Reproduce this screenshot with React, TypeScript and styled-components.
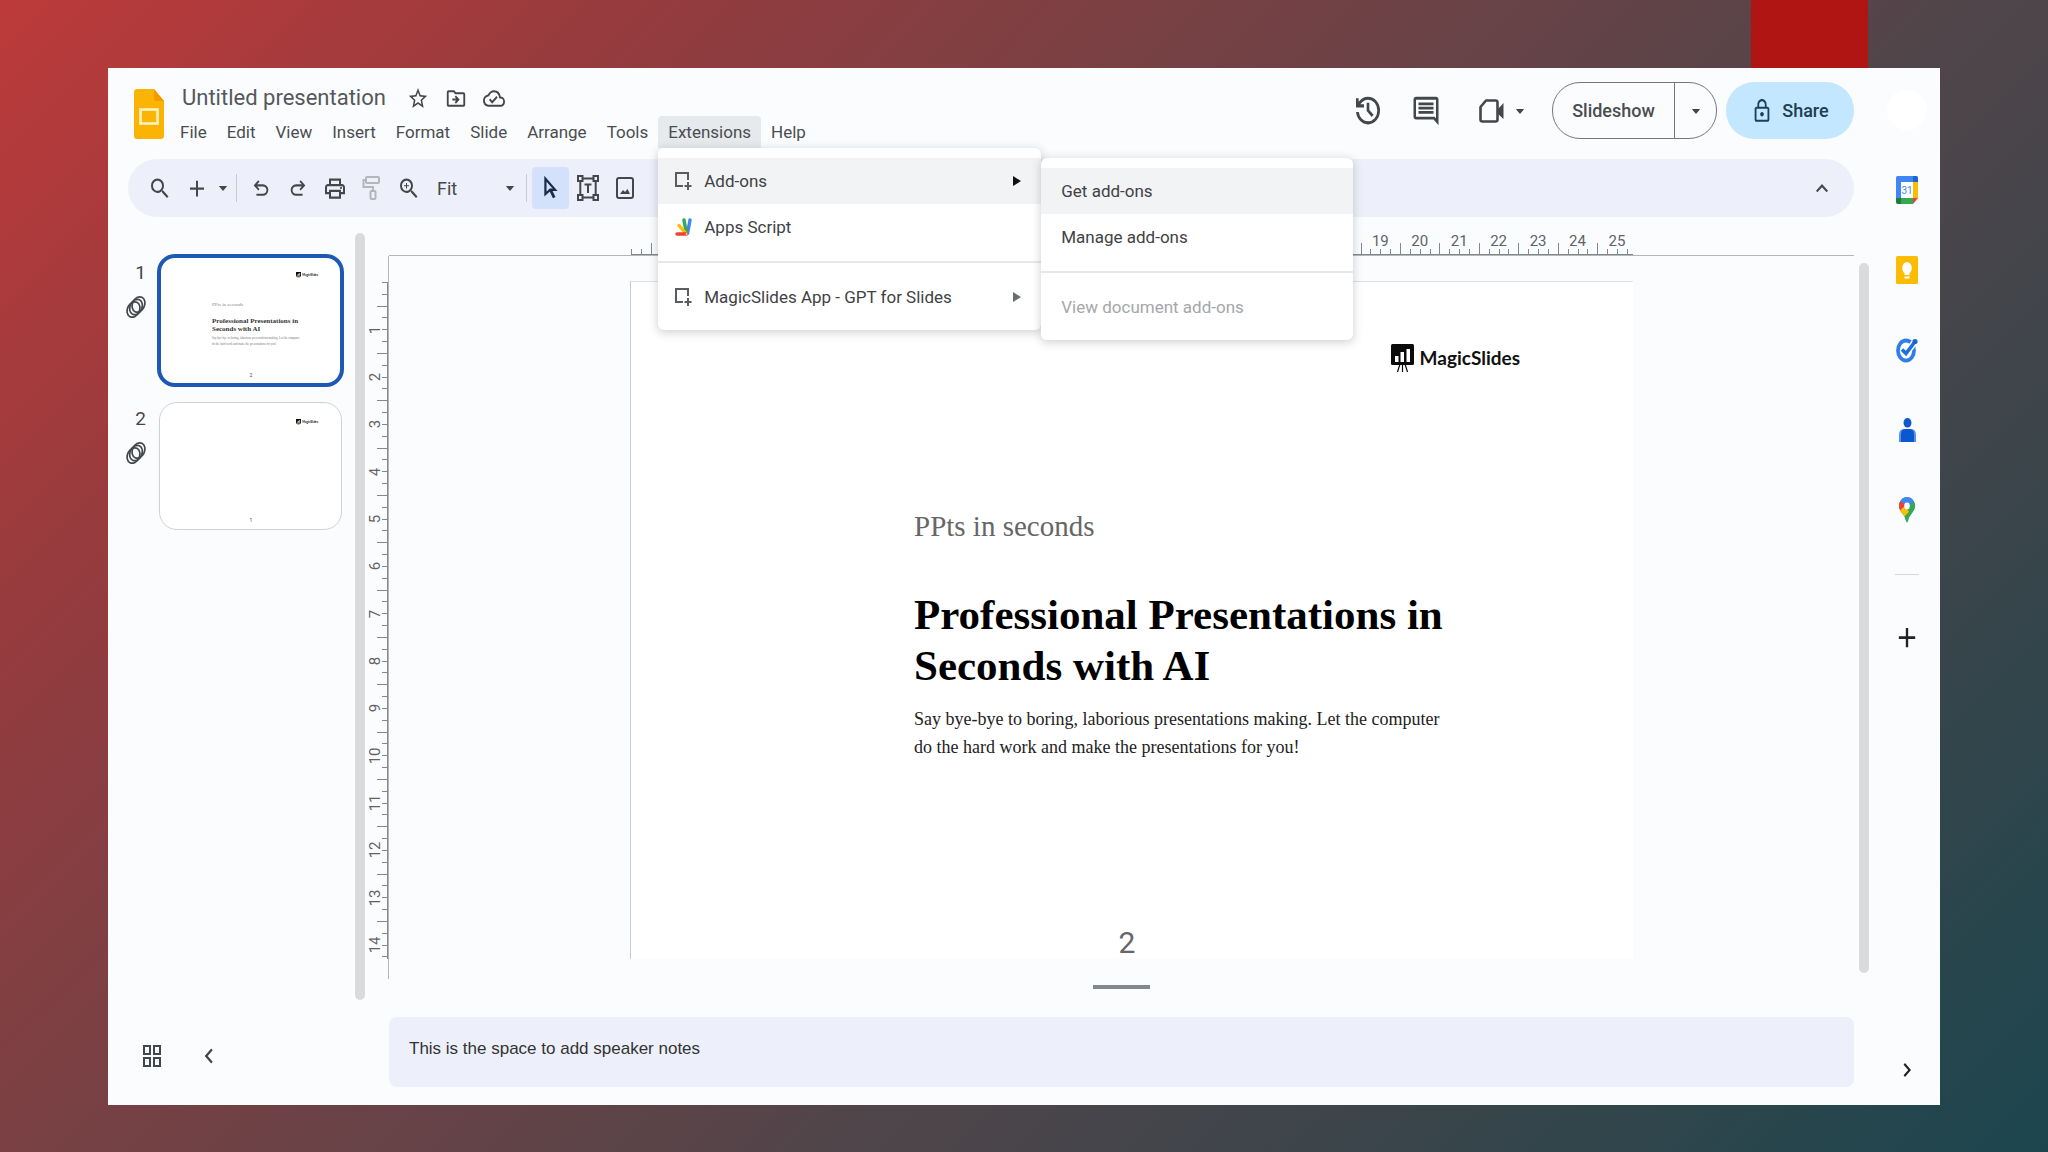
import React from "react";
import styled, { createGlobalStyle, css } from "styled-components";
import {
  MdAdd,
  MdArrowDropDown,
  MdChevronLeft,
  MdChevronRight,
  MdKeyboardArrowUp,
  MdLockOutline,
  MdOutlineCloudDone,
  MdOutlineDriveFileMove,
  MdOutlinePrint,
  MdSearch,
  MdStarOutline,
  MdZoomIn,
  MdOutlineInsertComment,
} from "react-icons/md";
import type { IconType } from "react-icons";

const ui = `Roboto, "Liberation Sans", sans-serif`;
const serif = `"Liberation Serif", serif`;
const ink = "#44474a";

const GlobalStyle = createGlobalStyle`
  *, *::before, *::after { box-sizing: border-box; }
  body { margin: 0; font-family: ${ui}; color: ${ink}; }
  button, select, textarea { font: inherit; color: inherit; border: 0; background: none; padding: 0; margin: 0; }
  button { cursor: pointer; }
  ul { list-style: none; margin: 0; padding: 0; }
  h1, h2, p { margin: 0; }
  svg { display: block; flex: none; }
`;

const Backdrop = styled.div`
  position: relative;
  display: flex;
  height: 100vh;
  min-height: 900px;
  padding: 68px 108px 47px;
  background: linear-gradient(135deg, #bd3a3a 0%, #963b3e 20%, #7d4043 34%, #50454a 62%, #36454b 82%, #1c464e 100%);
`;

const Ribbon = styled.div`
  position: absolute;
  top: 0;
  right: 180px;
  width: 117px;
  height: 68px;
  background: #b01513;
`;

const Window = styled.div`
  flex: 1;
  min-width: 0;
  display: flex;
  background: #fbfcfe;
`;

const Main = styled.div`
  flex: 1;
  min-width: 0;
  display: flex;
  flex-direction: column;
`;

/* ---------- header ---------- */

const Header = styled.header`
  display: flex;
  justify-content: space-between;
  height: 91px;
  padding: 14px 20px 0 26px;
`;

const Brand = styled.div`
  display: flex;
  gap: 18px;
`;

const LogoLink = styled.a`
  padding-top: 7px;
`;

const TitleRow = styled.div`
  display: flex;
  align-items: center;
  height: 32px;
  margin-bottom: 2px;
  gap: 16px;
`;

const Title = styled.h1`
  font-size: 22px;
  line-height: 32px;
  font-weight: 400;
  color: #55585b;
  margin-right: 5px;
  white-space: nowrap;
`;

const PlainButton = styled.button`
  display: flex;
  align-items: center;
  justify-content: center;
`;

const MenuBar = styled.ul`
  display: flex;
  margin-left: -12px;
`;

const MenuEntry = styled.li`
  position: relative;
`;

const MenuButton = styled.button<{ $open?: boolean }>`
  height: 32px;
  padding: 0 10px;
  font-size: 17px;
  line-height: 32px;
  color: #4a4d50;
  border-radius: 4px 4px 0 0;
  background: ${(p) => (p.$open ? "#e7eaec" : "transparent")};
`;

const Popup = styled.ul<{ $width: number; $side?: boolean }>`
  position: absolute;
  z-index: 2;
  top: ${(p) => (p.$side ? "0" : "100%")};
  left: ${(p) => (p.$side ? "100%" : "0")};
  width: ${(p) => p.$width}px;
  padding: 10px 0;
  border-radius: 6px;
  background: #fff;
  box-shadow: 0 2px 8px 1px rgba(60, 64, 67, 0.22);
`;

const PopupRow = styled.li`
  position: relative;
`;

const PopupButton = styled.button<{ $active?: boolean; $wide?: boolean }>`
  display: flex;
  align-items: center;
  gap: 12px;
  width: 100%;
  height: 46px;
  padding: 0 20px 0 ${(p) => (p.$wide ? 20 : 16)}px;
  font-size: 17px;
  text-align: left;
  white-space: nowrap;
  color: #3f4245;
  background: ${(p) => (p.$active ? "#f2f3f4" : "transparent")};
  &:disabled { color: #a5a7a9; }
`;

const PopupLabel = styled.span`
  flex: 1;
`;

const Divider = styled.li`
  height: 2px;
  margin: 11px 0;
  background: #e6e8ea;
`;

const Actions = styled.div`
  display: flex;
  align-items: center;
  height: 57px;
`;

const ActionButton = styled(PlainButton)`
  width: 48px;
  height: 48px;
  margin-right: 10px;
`;

const MeetButton = styled(PlainButton)`
  height: 48px;
  margin: 0 22px 0 19px;
  gap: 6px;
`;

const SplitButton = styled.div`
  display: flex;
  height: 57px;
  margin-right: 9px;
  border: 1px solid #74787b;
  border-radius: 28px;
`;

const SlideshowButton = styled.button`
  width: 121px;
  font-size: 18px;
  font-weight: 500;
  color: #4a4d50;
`;

const SlideshowMore = styled(PlainButton)`
  width: 42px;
  border-left: 1px solid #74787b;
`;

const ShareButton = styled(PlainButton)`
  width: 128px;
  height: 57px;
  gap: 9px;
  border-radius: 28px;
  background: #c2e7ff;
  color: #1d3f54;
  font-size: 18px;
  font-weight: 500;
`;

/* ---------- toolbar ---------- */

const Toolbar = styled.div`
  display: flex;
  align-items: center;
  height: 58px;
  margin: 0 20px;
  padding: 0 14px 0 13px;
  border-radius: 29px;
  background: #edf0fa;
`;

const Tool = styled(PlainButton)<{ $on?: boolean; $narrow?: boolean }>`
  width: ${(p) => (p.$narrow ? 16 : 37)}px;
  height: 42px;
  border-radius: 4px;
  background: ${(p) => (p.$on ? "#d3e1fb" : "transparent")};
  &:disabled { color: #b3b6bb; }
`;

const ToolRule = styled.span`
  width: 1px;
  height: 28px;
  margin: 0 5px;
  background: #c7cad0;
`;

const ZoomPicker = styled.label`
  position: relative;
  display: flex;
  align-items: center;
  width: 94px;
  height: 42px;
`;

const ZoomSelect = styled.select`
  width: 100%;
  padding-left: 10px;
  appearance: none;
  font-size: 18px;
`;

const ZoomCaret = styled.span`
  position: absolute;
  right: 1px;
  pointer-events: none;
`;

const Spacer = styled.span`
  flex: 1;
`;

/* ---------- workspace ---------- */

const Workspace = styled.div`
  flex: 1;
  min-height: 0;
  display: flex;
`;

const Filmstrip = styled.ul`
  flex: none;
  width: 247px;
  display: flex;
  flex-direction: column;
  gap: 13px;
  padding: 37px 11px 0 18px;
`;

const FilmItem = styled.li`
  display: flex;
  gap: 11px;
`;

const FilmMeta = styled.div`
  display: flex;
  flex-direction: column;
  align-items: flex-end;
  gap: 11px;
  width: 20px;
  padding-top: 8px;
  font-size: 19px;
  line-height: 22px;
`;

const Thumb = styled.button<{ $active?: boolean }>`
  flex: 1;
  display: flex;
  flex-direction: column;
  height: ${(p) => (p.$active ? 133 : 128)}px;
  margin: ${(p) => (p.$active ? 0 : 2)}px;
  padding: ${(p) => (p.$active ? "13px 22px 5px 51px" : "15px 23px 6px 52px")};
  text-align: left;
  background: #fff;
  border: ${(p) => (p.$active ? "4px solid #1d58b5" : "1px solid #cfd1d3")};
  border-radius: 18px;
`;

const ThumbLogo = styled.span`
  align-self: flex-end;
  display: flex;
  align-items: center;
  gap: 1px;
  font: 700 3px/8px Lato, sans-serif;
  color: #111;
`;

const ThumbSubtitle = styled.span`
  margin-top: 22px;
  font: 5px/8px ${serif};
  color: #888;
`;

const ThumbTitle = styled.span`
  margin-top: 8px;
  font: 700 7px/8px ${serif};
  color: #333;
  white-space: nowrap;
`;

const ThumbText = styled.span`
  margin-top: 2px;
  font: 3px/6px ${serif};
  color: #777;
  white-space: nowrap;
`;

const ThumbNumber = styled.span`
  margin-top: auto;
  padding-right: 28px;
  text-align: center;
  font-size: 5px;
  line-height: 6px;
`;

const Track = styled.div<{ $right?: boolean }>`
  flex: none;
  width: 10px;
  border-radius: 5px;
  background: #d9dbdd;
  margin: ${(p) => (p.$right ? "7px 5px 27px" : "16px 0 0")};
`;

const Editor = styled.div`
  flex: 1;
  min-width: 0;
  display: grid;
  grid-template-columns: 24px 1fr 20px;
  grid-template-rows: 39px 1fr;
`;

const TopRuler = styled.div`
  grid-column: 2;
  display: flex;
  padding: 0 221px 0 242px;
  border-bottom: 1px solid #b4b7ba;
`;

const SideRuler = styled.div`
  grid-column: 1;
  display: flex;
  flex-direction: column;
  margin-bottom: 21px;
  padding: 26px 0 20px;
  border-right: 1px solid #b4b7ba;
`;

const Scale = styled.div<{ $vertical?: boolean }>`
  flex: 1;
  min-width: 0;
  min-height: 0;
  display: flex;
  flex-direction: ${(p) => (p.$vertical ? "column" : "row")};
  ${(p) => (p.$vertical ? "border-right" : "border-bottom")}: 1px solid #85888b;
`;

const ScaleUnit = styled.div<{ $vertical?: boolean; $total: number; $half?: boolean }>`
  flex: 0 0 calc(${(p) => (p.$half ? 50 : 100)}% / ${(p) => p.$total});
  min-height: 0;
  min-width: 0;
  display: flex;
  flex-direction: ${(p) => (p.$vertical ? "row" : "column")};
  justify-content: flex-end;
  align-items: stretch;
`;

const ScaleLabel = styled.span<{ $vertical?: boolean }>`
  flex: none;
  font-family: ${ui};
  font-size: 15px;
  line-height: 16px;
  text-align: center;
  color: #5f6368;
  ${(p) =>
    p.$vertical &&
    css`
      width: 16px;
      writing-mode: vertical-rl;
      transform: rotate(180deg);
    `}
`;

const Ticks = styled.div<{ $vertical?: boolean }>`
  display: flex;
  flex: none;
  flex-direction: ${(p) => (p.$vertical ? "column" : "row")};
  align-items: flex-end;
  ${(p) => (p.$vertical ? "width: 10px; margin-left: -6px;" : "height: 11px; margin-top: -6px;")}
`;

const Tick = styled.i<{ $vertical?: boolean; $long?: boolean }>`
  flex: 1;
  ${(p) =>
    p.$vertical
      ? `width: ${p.$long ? 10 : 5}px; border-top: 1px solid #85888b;`
      : `height: ${p.$long ? 11 : 5}px; border-left: 1px solid #85888b;`}
`;

const Canvas = styled.div`
  grid-column: 2;
  display: flex;
  flex-direction: column;
  align-items: stretch;
  padding: 25px 221px 0 241px;
`;

const Slide = styled.section`
  flex: 1;
  display: flex;
  flex-direction: column;
  padding: 62px 113px 0 283px;
  background: #fff;
  border-top: 1px solid #dfe1e3;
  border-left: 1px solid #c9cccf;
`;

const SlideLogo = styled.div`
  align-self: flex-end;
  display: flex;
  align-items: center;
  gap: 6px;
  font: 700 19px/28px Lato, sans-serif;
  color: #111;
`;

const SlideSubtitle = styled.p`
  margin-top: 136px;
  font: 29px/36px ${serif};
  color: #666;
`;

const SlideTitle = styled.h2`
  margin-top: 45px;
  font: 700 43px/51px ${serif};
  color: #000;
  white-space: nowrap;
`;

const SlideText = styled.p`
  margin-top: 14px;
  font: 18px/28px ${serif};
  color: #222;
  white-space: nowrap;
`;

const PageNumber = styled.span`
  align-self: center;
  margin-top: auto;
  margin-right: 180px;
  font-size: 30px;
  line-height: 32px;
  color: #666;
`;

const Grip = styled.div`
  align-self: center;
  width: 57px;
  height: 4px;
  margin: 26px 20px 11px 0;
  background: #85888b;
`;

/* ---------- footer ---------- */

const Footer = styled.footer`
  display: flex;
  align-items: center;
  padding: 17px 20px 18px 24px;
`;

const FooterTools = styled.div`
  flex: none;
  display: flex;
  gap: 17px;
  width: 257px;
  padding-top: 8px;
`;

const FooterButton = styled(PlainButton)`
  width: 40px;
  height: 40px;
`;

const Notes = styled.textarea`
  flex: 1;
  height: 70px;
  padding: 20px;
  resize: none;
  border-radius: 8px;
  background: #edf0fa;
  font: 17px/24px "Liberation Sans", Arial, sans-serif;
  color: #333;
`;

/* ---------- side rail ---------- */

const Rail = styled.aside`
  flex: none;
  display: flex;
  flex-direction: column;
  align-items: center;
  gap: 40px;
  width: 66px;
  padding: 22px 0 15px;
`;

const Avatar = styled.button`
  width: 40px;
  height: 40px;
  border-radius: 20px;
  background: #fff;
`;

const RailButton = styled(PlainButton)<{ $last?: boolean }>`
  width: 40px;
  height: 40px;
  color: #222;
  ${(p) => p.$last && "margin-top: auto;"}
`;

const RailRule = styled.span`
  width: 24px;
  height: 1px;
  margin: 4px 0 2px;
  background: #d5d8da;
`;

/* ---------- icons ---------- */

const GlyphBox = styled.span<{ $w: number; $h: number }>`
  flex: none;
  display: block;
  svg {
    width: ${(p) => p.$w}px;
    height: ${(p) => p.$h}px;
  }
`;

/** A package icon drawn in a box that may be taller than it is wide. */
const Glyph = ({ of: Icon, w = 24, h = 27 }: { of: IconType; w?: number; h?: number }) => (
  <GlyphBox $w={w} $h={h}>
    <Icon preserveAspectRatio="none" aria-hidden />
  </GlyphBox>
);

const Caret = () => <Glyph of={MdArrowDropDown} w={20} h={24} />;

const SlidesLogo = () => (
  <svg width="30" height="50" viewBox="0 0 30 50" aria-hidden>
    <path d="M3 0H20L30 12V47a3 3 0 0 1-3 3H3a3 3 0 0 1-3-3V3a3 3 0 0 1 3-3Z" fill="#fbb404" />
    <path d="M20 0 30 12H22a2 2 0 0 1-2-2Z" fill="#f29a00" />
    <rect x="6.500" y="20.500" width="17" height="14" fill="none" stroke="#fff3c4" strokeWidth="2.600" />
  </svg>
);

const HistoryIcon = () => (
  <svg width="32" height="37" viewBox="0 0 24 24" preserveAspectRatio="none" fill="currentColor" aria-hidden>
    <path d="M12 21q-3.450 0-6.012-2.288T3.050 13H5.100q.35 2.600 2.313 4.300T12 19q2.925 0 4.963-2.037T19 12q0-2.925-2.037-4.962T12 5q-1.725 0-3.225.8T6.250 8H9v2H3V4h2v2.350q1.275-1.600 3.113-2.475T12 3q1.875 0 3.513.713t2.850 1.924q1.212 1.213 1.925 2.850T21 12q0 1.875-.712 3.513t-1.925 2.850q-1.213 1.212-2.850 1.925T12 21m2.800-4.800L11 12.400V7h2v4.600l3.200 3.200z" />
  </svg>
);

const MeetIcon = () => (
  <svg width="25" height="24" viewBox="0 0 25 24" fill="none" aria-hidden>
    <path d="M7 1.500H16.500a2 2 0 0 1 2 2V20.500a2 2 0 0 1-2 2H3.500a2 2 0 0 1-2-2V8Z" stroke="currentColor" strokeWidth="2.600" strokeLinejoin="round" />
    <path d="M19 10 24.500 4V20L19 15Z" fill="currentColor" />
  </svg>
);

const undoPath =
  "M7 19v-2h7.100q1.575 0 2.737-1Q18 15 18 13.500t-1.163-2.500Q15.675 10 14.100 10H7.800l2.600 2.600L9 14 4 9l5-5 1.400 1.400L7.800 8h6.300q2.425 0 4.163 1.575Q20 11.150 20 13.500t-1.737 3.925Q16.525 19 14.100 19Z";

const UndoIcon = () => (
  <svg width="22" height="25" viewBox="0 0 24 24" preserveAspectRatio="none" fill="currentColor" aria-hidden>
    <path d={undoPath} />
  </svg>
);

const RedoIcon = () => (
  <svg width="22" height="25" viewBox="0 0 24 24" preserveAspectRatio="none" fill="currentColor" aria-hidden>
    <path d={undoPath} transform="translate(24 0) scale(-1 1)" />
  </svg>
);

const PaintIcon = () => (
  <svg width="20" height="26" viewBox="0 0 20 26" fill="none" stroke="currentColor" strokeWidth="2" aria-hidden>
    <rect x="4" y="2" width="13" height="6" rx="1" />
    <path d="M4 5H1.500V12H11V16" />
    <rect x="8.500" y="16" width="5" height="8" rx="1" />
  </svg>
);

const CursorIcon = () => (
  <svg width="15" height="24" viewBox="0 0 16 26" fill="none" stroke="#1b2b4b" strokeWidth="2.400" aria-hidden>
    <path d="M2.500 3 13 15H7.500L2.500 19.500Z" />
    <path d="M7.500 14 12 23.500" strokeWidth="3" />
  </svg>
);

const TextBoxIcon = () => (
  <svg width="22" height="26" viewBox="0 0 22 26" fill="none" stroke="currentColor" strokeWidth="2" aria-hidden>
    <rect x="1" y="1" width="4.500" height="5" />
    <rect x="16.500" y="1" width="4.500" height="5" />
    <rect x="1" y="20" width="4.500" height="5" />
    <rect x="16.500" y="20" width="4.500" height="5" />
    <path d="M5.500 3.500H16.500M5.500 22.500H16.500M3.300 6V20M18.700 6V20M7.500 9.500H14.500M11 9.500V18" />
  </svg>
);

const ImageIcon = () => (
  <svg width="18" height="22" viewBox="0 0 18 22" fill="none" aria-hidden>
    <rect x="1" y="1" width="16" height="20" rx="2" stroke="currentColor" strokeWidth="2" />
    <path d="M4 17 7 13 9 15 11.500 12 14 17Z" fill="currentColor" />
  </svg>
);

const AddonIcon = () => (
  <svg width="18" height="20" viewBox="0 0 18 20" fill="none" stroke="#5a5d60" strokeWidth="2" aria-hidden>
    <path d="M14 9V2H2V15H9" />
    <path d="M14 11V19M10.500 15H17.500" />
  </svg>
);

const AppsScriptIcon = () => (
  <svg width="18" height="20" viewBox="0 0 18 20" fill="none" strokeLinecap="round" strokeWidth="3.400" aria-hidden>
    <path d="M13.500 16.500 16 3" stroke="#4285f4" />
    <path d="M12.500 16.500 10 3" stroke="#34a853" />
    <path d="M12 16.500 5 8.500" stroke="#fbbc04" />
    <path d="M12 17 3 17" stroke="#ea4335" />
    <circle cx="12.500" cy="17" r=".8" fill="#fff" />
  </svg>
);

const ArrowRight = ({ color }: { color: string }) => (
  <svg width="8" height="10" viewBox="0 0 8 10" aria-hidden>
    <path d="M0 0 8 5 0 10Z" fill={color} />
  </svg>
);

const MotionIcon = () => (
  <svg width="20" height="24" viewBox="0 0 20 24" fill="none" stroke="#44474a" strokeWidth="1.700" aria-hidden>
    <ellipse cx="7.500" cy="14.500" rx="6" ry="8" transform="rotate(25 7.500 14.500)" />
    <ellipse cx="10" cy="12" rx="6" ry="8" transform="rotate(25 10 12)" />
    <ellipse cx="12.500" cy="9.500" rx="6" ry="8" transform="rotate(25 12.500 9.500)" />
  </svg>
);

const MagicLogo = ({ width, height }: { width: number; height: number }) => (
  <svg width={width} height={height} viewBox="0 0 23 28" preserveAspectRatio="none" aria-hidden>
    <rect width="23" height="21" rx="1.500" fill="#0b0b0b" />
    <path d="M4 12H7.500V18H4ZM9.500 8H13V18H9.500ZM15.500 5H19V18H15.500Z" fill="#fff" />
    <path d="M9 20 6.500 28M11.500 20V28M14 20 16.500 28" stroke="#0b0b0b" strokeWidth="1.200" />
  </svg>
);

const CalendarIcon = () => (
  <svg width="22" height="28" viewBox="0 0 22 28" aria-hidden>
    <path d="M1.500 0H17V6H5V22H0V2Q0 0 1.500 0Z" fill="#4285f4" />
    <path d="M17 0H20.500Q22 0 22 2V6H17Z" fill="#1967d2" />
    <path d="M17 6H22V22H17Z" fill="#fbbc04" />
    <path d="M5 22H17V28H5Z" fill="#34a853" />
    <path d="M0 22H5V28H1.500Q0 28 0 26Z" fill="#188038" />
    <path d="M17 22H22L17 28Z" fill="#ea4335" />
    <rect x="5" y="6" width="12" height="16" fill="#fff" />
    <text x="11" y="18" fontSize="10" fontFamily={ui} textAnchor="middle" fill="#4285f4">31</text>
  </svg>
);

const KeepIcon = () => (
  <svg width="22" height="28" viewBox="0 0 22 28" aria-hidden>
    <rect width="22" height="28" rx="1.500" fill="#fbbc04" />
    <ellipse cx="11" cy="12" rx="4.800" ry="6" fill="#fff" />
    <path d="M8.500 16H13.500V19H8.500ZM8.500 20.500H13.500V22.500H8.500Z" fill="#fff" />
  </svg>
);

const TasksIcon = () => (
  <svg width="22" height="26" viewBox="0 0 22 26" fill="none" aria-hidden>
    <ellipse cx="10" cy="13.500" rx="8" ry="10" stroke="#2f7de9" strokeWidth="3.800" />
    <path d="M6 12.500 10 16.500 19.500 4" stroke="#fff" strokeWidth="6.500" />
    <path d="M6 12.500 10 16.500 19.500 4" stroke="#1f6fe0" strokeWidth="3.600" />
    <circle cx="19" cy="4.500" r="2.600" fill="#1a63d8" />
  </svg>
);

const ContactsIcon = () => (
  <svg width="17" height="24" viewBox="0 0 17 24" aria-hidden>
    <ellipse cx="8.500" cy="4.800" rx="4" ry="4.800" fill="#1158c9" />
    <path d="M0 24V17Q0 11 5 11H12Q17 11 17 17V24Z" fill="#5c8df0" />
    <path d="M2 24V17Q2 11 6 11H11Q15 11 15 17V24Z" fill="#0b57d0" />
  </svg>
);

const MapsIcon = () => (
  <svg width="16" height="26" viewBox="0 0 16 26" aria-hidden>
    <clipPath id="pin">
      <path d="M8 0C3.500 0 0 4 0 9C0 15 6 17 7 24Q8 27 9 24C10 17 16 15 16 9C16 4 12.500 0 8 0Z" />
    </clipPath>
    <g clipPath="url(#pin)">
      <rect width="16" height="26" fill="#34a853" />
      <path d="M0 0H16V4L8 10 0 4Z" fill="#4285f4" />
      <path d="M0 3 8 9 3 14H0Z" fill="#ea4335" />
      <path d="M0 14 6 9 12 13 3 22Z" fill="#fbbc04" />
      <path d="M16 3 8 12 10 15 4 22 12 26 16 20Z" fill="#34a853" />
    </g>
    <ellipse cx="8" cy="9" rx="2.800" ry="3.400" fill="#fff" />
  </svg>
);

const GridIcon = () => (
  <svg width="18" height="22" viewBox="0 0 18 22" fill="none" stroke="currentColor" strokeWidth="2" aria-hidden>
    <path d="M1 1H7V9H1ZM11 1H17V9H11ZM1 13H7V21H1ZM11 13H17V21H11Z" />
  </svg>
);

/* ---------- pieces ---------- */

/** One ruler axis: a half unit first, then whole units centred on their number. */
const RulerScale = ({ length, vertical }: { length: number; vertical?: boolean }) => (
  <Scale $vertical={vertical}>
    <ScaleUnit $vertical={vertical} $total={length} $half>
      <Ticks $vertical={vertical}>
        <Tick $vertical={vertical} />
        <Tick $vertical={vertical} />
      </Ticks>
    </ScaleUnit>
    {Array.from({ length: Math.floor(length) }, (_, i) => (
      <ScaleUnit key={i} $vertical={vertical} $total={length}>
        <ScaleLabel $vertical={vertical}>{i + 1}</ScaleLabel>
        <Ticks $vertical={vertical}>
          <Tick $vertical={vertical} $long />
          <Tick $vertical={vertical} />
          <Tick $vertical={vertical} />
          <Tick $vertical={vertical} />
        </Ticks>
      </ScaleUnit>
    ))}
  </Scale>
);

const ExtensionsMenu = () => (
  <Popup $width={383}>
    <PopupRow>
      <PopupButton $active>
        <AddonIcon />
        <PopupLabel>Add-ons</PopupLabel>
        <ArrowRight color="#111" />
      </PopupButton>
      <Popup $width={312} $side>
        <PopupRow>
          <PopupButton $wide $active>Get add-ons</PopupButton>
        </PopupRow>
        <PopupRow>
          <PopupButton $wide>Manage add-ons</PopupButton>
        </PopupRow>
        <Divider role="separator" />
        <PopupRow>
          <PopupButton $wide disabled>View document add-ons</PopupButton>
        </PopupRow>
      </Popup>
    </PopupRow>
    <PopupRow>
      <PopupButton>
        <AppsScriptIcon />
        <PopupLabel>Apps Script</PopupLabel>
      </PopupButton>
    </PopupRow>
    <Divider role="separator" />
    <PopupRow>
      <PopupButton>
        <AddonIcon />
        <PopupLabel>MagicSlides App - GPT for Slides</PopupLabel>
        <ArrowRight color="#6a6d70" />
      </PopupButton>
    </PopupRow>
  </Popup>
);

const menus = ["File", "Edit", "View", "Insert", "Format", "Slide", "Arrange", "Tools", "Extensions", "Help"];

export default function App() {
  return (
    <Backdrop>
      <GlobalStyle />
      <Ribbon />
      <Window>
        <Main>
          <Header>
            <Brand>
              <LogoLink href="#home" aria-label="Slides home">
                <SlidesLogo />
              </LogoLink>
              <div>
                <TitleRow>
                  <Title>Untitled presentation</Title>
                  <PlainButton aria-label="Star"><Glyph of={MdStarOutline} w={22} h={25} /></PlainButton>
                  <PlainButton aria-label="Move"><Glyph of={MdOutlineDriveFileMove} w={22} h={25} /></PlainButton>
                  <PlainButton aria-label="Document status"><Glyph of={MdOutlineCloudDone} w={22} h={25} /></PlainButton>
                </TitleRow>
                <nav>
                  <MenuBar>
                    {menus.map((name) => (
                      <MenuEntry key={name}>
                        <MenuButton $open={name === "Extensions"}>{name}</MenuButton>
                        {name === "Extensions" && <ExtensionsMenu />}
                      </MenuEntry>
                    ))}
                  </MenuBar>
                </nav>
              </div>
            </Brand>
            <Actions>
              <ActionButton aria-label="Version history"><HistoryIcon /></ActionButton>
              <ActionButton aria-label="Comments"><Glyph of={MdOutlineInsertComment} w={30} h={34} /></ActionButton>
              <MeetButton aria-label="Join a call">
                <MeetIcon />
                <Caret />
              </MeetButton>
              <SplitButton>
                <SlideshowButton>Slideshow</SlideshowButton>
                <SlideshowMore aria-label="Slideshow options"><Caret /></SlideshowMore>
              </SplitButton>
              <ShareButton>
                <Glyph of={MdLockOutline} w={22} h={26} />
                Share
              </ShareButton>
            </Actions>
          </Header>

          <Toolbar role="toolbar">
            <Tool aria-label="Search"><Glyph of={MdSearch} /></Tool>
            <Tool aria-label="New slide"><Glyph of={MdAdd} /></Tool>
            <Tool $narrow aria-label="Slide layouts"><Caret /></Tool>
            <ToolRule />
            <Tool aria-label="Undo"><UndoIcon /></Tool>
            <Tool aria-label="Redo"><RedoIcon /></Tool>
            <Tool aria-label="Print"><Glyph of={MdOutlinePrint} /></Tool>
            <Tool disabled aria-label="Paint format"><PaintIcon /></Tool>
            <Tool aria-label="Zoom"><Glyph of={MdZoomIn} /></Tool>
            <ZoomPicker>
              <ZoomSelect aria-label="Zoom level">
                <option>Fit</option>
              </ZoomSelect>
              <ZoomCaret><Caret /></ZoomCaret>
            </ZoomPicker>
            <ToolRule />
            <Tool $on aria-label="Select"><CursorIcon /></Tool>
            <Tool aria-label="Text box"><TextBoxIcon /></Tool>
            <Tool aria-label="Image"><ImageIcon /></Tool>
            <Spacer />
            <Tool aria-label="Hide the menus"><Glyph of={MdKeyboardArrowUp} /></Tool>
          </Toolbar>

          <Workspace>
            <Filmstrip>
              <FilmItem>
                <FilmMeta>1<MotionIcon /></FilmMeta>
                <Thumb $active aria-label="Slide 1">
                  <ThumbLogo><MagicLogo width={5} height={6} />MagicSlides</ThumbLogo>
                  <ThumbSubtitle>PPts in seconds</ThumbSubtitle>
                  <ThumbTitle>Professional Presentations in<br />Seconds with AI</ThumbTitle>
                  <ThumbText>
                    Say bye-bye to boring, laborious presentations making. Let the computer
                    <br />
                    do the hard work and make the presentations for you!
                  </ThumbText>
                  <ThumbNumber>2</ThumbNumber>
                </Thumb>
              </FilmItem>
              <FilmItem>
                <FilmMeta>2<MotionIcon /></FilmMeta>
                <Thumb aria-label="Slide 2">
                  <ThumbLogo><MagicLogo width={5} height={6} />MagicSlides</ThumbLogo>
                  <ThumbNumber>1</ThumbNumber>
                </Thumb>
              </FilmItem>
            </Filmstrip>
            <Track />
            <Editor>
              <TopRuler><RulerScale length={25.4} /></TopRuler>
              <SideRuler><RulerScale length={14.3} vertical /></SideRuler>
              <Canvas>
                <Slide>
                  <SlideLogo><MagicLogo width={23} height={28} />MagicSlides</SlideLogo>
                  <SlideSubtitle>PPts in seconds</SlideSubtitle>
                  <SlideTitle>Professional Presentations in<br />Seconds with AI</SlideTitle>
                  <SlideText>
                    Say bye-bye to boring, laborious presentations making. Let the computer
                    <br />
                    do the hard work and make the presentations for you!
                  </SlideText>
                  <PageNumber>2</PageNumber>
                </Slide>
                <Grip />
              </Canvas>
              <Track $right />
            </Editor>
          </Workspace>

          <Footer>
            <FooterTools>
              <FooterButton aria-label="Grid view"><GridIcon /></FooterButton>
              <FooterButton aria-label="Hide filmstrip"><Glyph of={MdChevronLeft} w={26} h={30} /></FooterButton>
            </FooterTools>
            <Notes aria-label="Speaker notes" defaultValue="This is the space to add speaker notes" />
          </Footer>
        </Main>

        <Rail>
          <Avatar aria-label="Account" />
          <RailButton aria-label="Calendar"><CalendarIcon /></RailButton>
          <RailButton aria-label="Keep"><KeepIcon /></RailButton>
          <RailButton aria-label="Tasks"><TasksIcon /></RailButton>
          <RailButton aria-label="Contacts"><ContactsIcon /></RailButton>
          <RailButton aria-label="Maps"><MapsIcon /></RailButton>
          <RailRule />
          <RailButton aria-label="Get add-ons"><Glyph of={MdAdd} w={28} h={33} /></RailButton>
          <RailButton $last aria-label="Hide side panel"><Glyph of={MdChevronRight} w={24} h={28} /></RailButton>
        </Rail>
      </Window>
    </Backdrop>
  );
}
